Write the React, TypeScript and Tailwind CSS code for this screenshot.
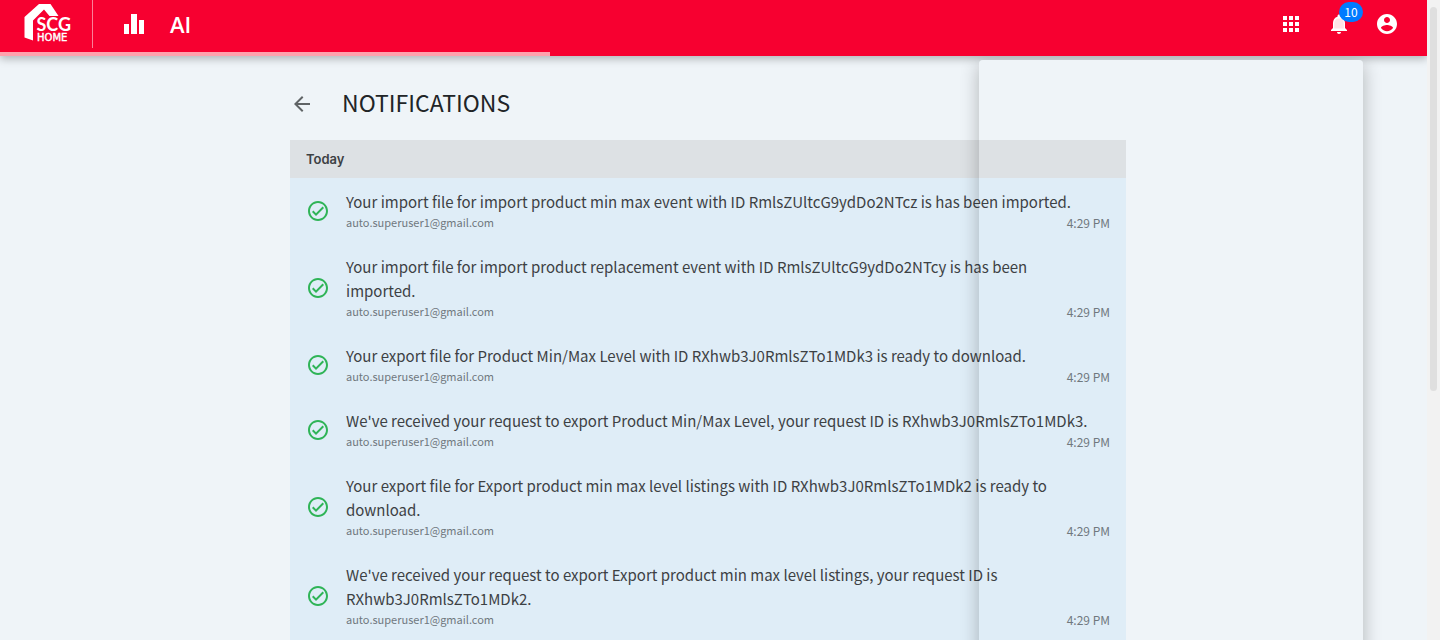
import React from 'react';

const account = 'auto.superuser1@gmail.com';

const notifications = [
  'Your import file for import product min max event with ID RmlsZUltcG9ydDo2NTcz is has been imported.',
  'Your import file for import product replacement event with ID RmlsZUltcG9ydDo2NTcy is has been imported.',
  'Your export file for Product Min/Max Level with ID RXhwb3J0RmlsZTo1MDk3 is ready to download.',
  "We've received your request to export Product Min/Max Level, your request ID is RXhwb3J0RmlsZTo1MDk3.",
  'Your export file for Export product min max level listings with ID RXhwb3J0RmlsZTo1MDk2 is ready to download.',
  "We've received your request to export Export product min max level listings, your request ID is RXhwb3J0RmlsZTo1MDk2.",
];

function Icon({ d, className = '' }: { d: string; className?: string }) {
  return (
    <svg viewBox="0 0 24 24" aria-hidden="true" className={`size-6 shrink-0 fill-current ${className}`}>
      <path d={d} />
    </svg>
  );
}

const icons = {
  bars: 'M2 12h5v10H2zM9 2h6v20H9zM17 8h5v14h-5z',
  apps: 'M4 4h4v4H4zM10 4h4v4h-4zM16 4h4v4h-4zM4 10h4v4H4zM10 10h4v4h-4zM16 10h4v4h-4zM4 16h4v4H4zM10 16h4v4h-4zM16 16h4v4h-4z',
  account:
    'M12 2C6.48 2 2 6.48 2 12s4.48 10 10 10 10-4.48 10-10S17.52 2 12 2zm0 3c1.66 0 3 1.34 3 3s-1.34 3-3 3-3-1.34-3-3 1.34-3 3-3zm0 14.2c-2.5 0-4.71-1.28-6-3.22.03-1.99 4-3.08 6-3.08 1.99 0 5.97 1.09 6 3.08-1.29 1.94-3.5 3.22-6 3.22z',
  back: 'M20 11H7.83l5.59-5.59L12 4l-8 8 8 8 1.41-1.41L7.83 13H20v-2z',
  check:
    'M12 2C6.5 2 2 6.5 2 12s4.5 10 10 10 10-4.5 10-10S17.5 2 12 2m0 18c-4.41 0-8-3.59-8-8s3.59-8 8-8 8 3.59 8 8-3.59 8-8 8m4.59-12.42L10 14.17l-2.59-2.58L6 13l4 4 8-8-1.41-1.42z',
};

function Logo() {
  return (
    <svg viewBox="0 0 50 40" className="h-10 w-[50px] fill-white" role="img" aria-label="SCG Home">
      <path d="M0.500 13L15 0H26.500L34.500 12H25.500L20 5.500L9 16.500V36.500L0.500 33.500Z" />
      <text x="12.500" y="27" fontSize="18" fontWeight="700" fontFamily="Lato, sans-serif">SCG</text>
      <text x="13" y="37" fontSize="10" stroke="#fff" strokeWidth="0.4" fontFamily="DejaVu Sans, sans-serif">HOME</text>
    </svg>
  );
}

function Header() {
  return (
    <header className="relative z-10 flex h-14 shrink-0 items-start justify-between bg-[#f70030] pr-7 pl-6 text-white shadow-[0_3px_8px_0_rgba(0,0,0,0.26)]">
      <div className="flex h-12 items-center">
        <a href="#home" className="flex h-12 items-center border-r border-white/50 pr-[18px]">
          <Logo />
        </a>
        <button type="button" aria-label="Dashboard" className="ml-[29px]">
          <Icon d={icons.bars} />
        </button>
        <span className="ml-6 font-['Open_Sans',sans-serif] text-[22px] leading-8 font-semibold">AI</span>
      </div>
      <nav className="flex h-12 items-center gap-6">
        <button type="button" aria-label="Apps">
          <Icon d={icons.apps} />
        </button>
        <button type="button" aria-label="Notifications" className="relative">
          <svg viewBox="0 0 24 24" aria-hidden="true" className="size-6 fill-white">
            <path d="M12 22c1.100 0 2-.9 2-2h-4c0 1.100.9 2 2 2zM18 16v-5c0-3.070-1.630-5.640-4.500-6.320V4c0-.83-.67-1.500-1.500-1.500s-1.500.67-1.500 1.500v.68C7.640 5.360 6 7.920 6 11v5l-2 2v1h16v-1l-2-2z" />
            <path className="fill-[#ffe3e6]" d="M12 6.500c-2.900 0-4.800 2-4.800 5v5h9.600v-5c0-3-1.900-5-4.800-5z" />
          </svg>
          <span className="absolute -top-[10px] left-3 flex h-5 w-6 items-center justify-center rounded-full bg-[#007bff] text-[12px] leading-5">
            10
          </span>
        </button>
        <button type="button" aria-label="Account">
          <Icon d={icons.account} />
        </button>
      </nav>
      <div className="absolute bottom-0 left-0 h-1 w-[550px] bg-[#ffa1ad]" />
    </header>
  );
}

function NotificationRow({ message }: { message: string }) {
  return (
    <li className="flex items-center gap-4 px-4 py-3">
      <Icon d={icons.check} className="text-[#2fb457]" />
      <div className="min-w-0 flex-1">
        <p className="max-w-[750px] text-[15px] leading-6 text-[#3d4144]">{message}</p>
        <div className="flex justify-between text-[11px] leading-[17px] text-[#70787e]">
          <span>{account}</span>
          <time className="text-[12px]">4:29 PM</time>
        </div>
      </div>
    </li>
  );
}

export default function App() {
  return (
    <div className="flex h-screen overflow-hidden bg-[#eff4f8] font-['Noto_Sans_CJK_SC','Noto_Sans',sans-serif]">
      <div className="relative flex min-w-0 flex-1 flex-col overflow-hidden">
        <Header />
        <main className="w-full pr-[11px]">
          <div className="mx-auto max-w-[836px]">
            <div className="flex h-[84px] items-center gap-7 pt-3">
              <button type="button" aria-label="Back" className="text-[#606466]">
                <Icon d={icons.back} />
              </button>
              <h1 className="pb-1 text-[23px] leading-8 text-[#212427]">NOTIFICATIONS</h1>
            </div>
            <h2 className="bg-[#dde1e4] px-4 font-['Inter',sans-serif] text-[13px] leading-[38px] font-semibold text-[#3d4144]">
              Today
            </h2>
            <ul className="bg-[#dfedf7]">
              {notifications.map((message) => (
                <NotificationRow key={message} message={message} />
              ))}
            </ul>
          </div>
        </main>
        <div className="pointer-events-none absolute top-[60px] right-16 -bottom-5 w-96 rounded shadow-[0_5px_18px_1px_rgba(0,0,0,0.24)]" />
        <div className="pointer-events-none absolute top-[60px] right-16 z-20 h-4 w-96 rounded-t bg-[#eff4f8]" />
      </div>
      <div className="w-[13px] shrink-0 bg-[#f2f2f2] px-[3px] pt-[7px]">
        <div className="h-96 rounded-full bg-[#dfdfdf]" />
      </div>
    </div>
  );
}
